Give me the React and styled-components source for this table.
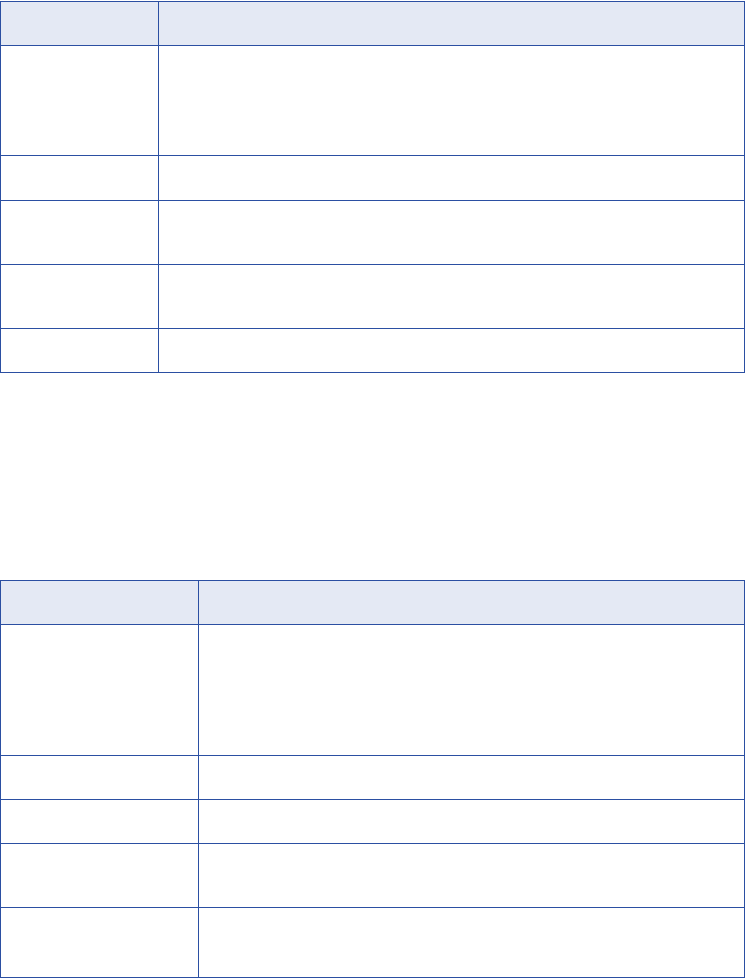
import styled, { createGlobalStyle } from "styled-components";

const GlobalStyle = createGlobalStyle`
    * {
        box-sizing: border-box;
    }

    body {
        margin: 0;
        background: #fff;
        font-family: "Liberation Sans", Arial, sans-serif;
    }
`;

const Page = styled.div`
    display: flex;
    flex-direction: column;
    gap: 207px;
    padding-top: 1px;
    width: 745px;
`;

const Table = styled.div`
    display: flex;
    flex-direction: column;
    border: 1px solid #2b4fa2;
    border-bottom: none;
    width: 100%;
`;

const Row = styled.div`
    display: grid;
    grid-template-columns: ${(p) => p.$first}px 1fr;
    height: ${(p) => p.$h}px;
    border-bottom: 1px solid #2b4fa2;
    background: ${(p) => (p.$head ? "#e4e9f4" : "#fff")};
`;

const Cell = styled.div`
    padding: 10px 12px;
    font-size: 14px;
    color: #222;

    & + & {
        border-left: 1px solid #2b4fa2;
    }
`;

const tables = [
    { first: 157, rows: [44, 110, 45, 64, 64, 44] },
    { first: 197, rows: [44, 131, 44, 44, 64, 70] },
];

export default function App() {
    return (
        <>
            <GlobalStyle />
            <Page>
                {tables.map((t, ti) => (
                    <Table key={ti}>
                        {t.rows.map((h, i) => (
                            <Row key={i} $first={t.first} $h={h} $head={i === 0}>
                                <Cell />
                                <Cell />
                            </Row>
                        ))}
                    </Table>
                ))}
            </Page>
        </>
    );
}
